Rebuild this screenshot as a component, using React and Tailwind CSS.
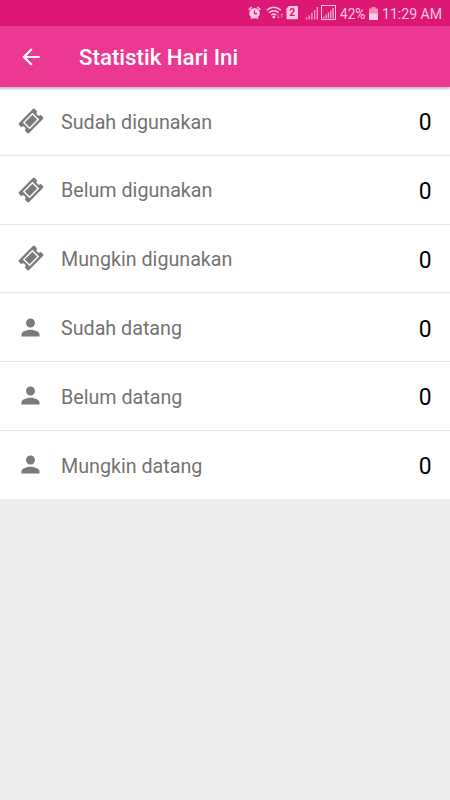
import React from "react";
import { MdPerson, MdArrowBack } from "react-icons/md";

const STATS = [
  { label: "Sudah digunakan", value: 0, icon: "ticket" },
  { label: "Belum digunakan", value: 0, icon: "ticket" },
  { label: "Mungkin digunakan", value: 0, icon: "ticket" },
  { label: "Sudah datang", value: 0, icon: "person" },
  { label: "Belum datang", value: 0, icon: "person" },
  { label: "Mungkin datang", value: 0, icon: "person" },
];

function TicketIcon() {
  return (
    <svg className="w-[26px] h-[26px] shrink-0" viewBox="-13 -13 26 26" fill="currentColor">
      <g transform="rotate(-45)">
        <path
          fillRule="evenodd"
          d="M-9.8-7.1H9.8Q11.2-7.1 11.2-5.7V-2.4A2.4 2.4 0 0 0 11.2 2.4V5.7Q11.2 7.1 9.8 7.1H-9.8Q-11.2 7.1-11.2 5.7V2.4A2.4 2.4 0 0 0-11.2-2.4V-5.7Q-11.2-7.1-9.8-7.1ZM-6.8-4.8V4.8H6.8V-4.8Z"
        />
        <rect x="-5.4" y="-3.4" width="10.8" height="6.8" />
      </g>
    </svg>
  );
}

function StatusIcons() {
  return (
    <svg className="w-[90px] h-[18px] shrink-0" viewBox="247 4 90 18" fill="none" stroke="currentColor">
      {/* alarm */}
      <circle cx="254.5" cy="13.3" r="5.3" fill="currentColor" stroke="none" />
      <path d="M248.7 9.8l3-2.8M260.3 9.8l-3-2.8M251 18.7l1.2-1.2M258 18.7l-1.2-1.2" strokeWidth="1.5" />
      <path d="M254.5 10.5v3.2h2.5" stroke="#dc1874" strokeWidth="1.2" />
      {/* wifi */}
      <path d="M266.8 10.2q7-5.8 14 0M269 12.6q4.8-3.8 9.6 0M271.2 15q2.6-2 5.2 0" strokeWidth="1.5" />
      <circle cx="273.8" cy="17" r="1.4" fill="currentColor" stroke="none" />
      <path d="M278.3 14v4m-1.2-1.2l1.2 1.2 1.2-1.2M281.8 18v-4m-1.2 1.2l1.2-1.2 1.2 1.2" strokeWidth=".8" opacity=".65" />
      {/* sim slot */}
      <path d="M289 6h8.2q.8 0 .8.8v11.6q0 .8-.8.8h-9.9q-.8 0-.8-.8V8.4z" fill="currentColor" stroke="none" />
      <text x="292.2" y="16.4" textAnchor="middle" fill="#dc1874" stroke="none" className="font-bold text-[10.5px]">2</text>
      {/* signal */}
      <path d="M306.5 19.5v-2M309.2 19.5v-4M311.9 19.5v-6.5M314.6 19.5v-9.5M317.3 19.5V7" strokeWidth="1.4" opacity=".75" />
      <rect x="321.5" y="5.5" width="14" height="14" strokeWidth="1" />
      <path d="M323.9 18.5v-2M326.2 18.5v-4M328.5 18.5v-6M330.8 18.5v-8M333.1 18.5v-10.5" strokeWidth="1.3" opacity=".85" />
    </svg>
  );
}

function StatusBar() {
  return (
    <div className="h-[26px] shrink-0 bg-[#dc1874] text-[#fbc8e0] flex items-center pl-[247px]">
      <StatusIcons />
      <span className="ml-[3px] pt-[3px] w-[26px] shrink-0 text-[15.5px] leading-none whitespace-nowrap origin-left scale-x-[.88]">
        42%
      </span>
      <svg className="ml-[3px] w-[9px] h-[13px] shrink-0" viewBox="0 0 9 13" fill="currentColor">
        <path d="M2.5 0h4v1.5H9V13H0V1.5h2.5z" opacity=".65" />
        <path d="M0 6.5h9V13H0z" />
      </svg>
      <span className="ml-[4px] pt-[3px] text-[15.5px] leading-none whitespace-nowrap origin-left scale-x-[.91]">
        11:29 AM
      </span>
    </div>
  );
}

function StatRow({ label, value, icon }) {
  return (
    <li className="h-[68.75px] last:h-[68.25px] bg-white border-b border-[#e6e6e6] last:border-b-0 flex items-center px-[18px]">
      <span className="w-[25px] flex justify-center text-[#7b7b7b]">
        {icon === "ticket" ? (
          <TicketIcon />
        ) : (
          <MdPerson className="w-[27px] h-[27px] shrink-0" />
        )}
      </span>
      <span className="ml-[18px] pt-[3px] text-[19.7px] text-[#737373]">{label}</span>
      <span className="ml-auto mr-px pt-[3px] text-[24px] text-black origin-right scale-x-95">{value}</span>
    </li>
  );
}

export default function App() {
  return (
    <div className="h-screen flex flex-col overflow-hidden bg-[#ededed] font-['Roboto',sans-serif]">
      <StatusBar />
      <header className="relative z-10 h-[61px] shrink-0 bg-[#ed3893] text-white flex items-center pl-[18px] shadow-[0_2px_2px_rgba(0,0,0,0.25)]">
        <MdArrowBack className="w-[26px] h-[26px]" />
        <h1 className="ml-[35px] pt-[2px] text-[22.3px] font-medium">Statistik Hari Ini</h1>
      </header>
      <ul>
        {STATS.map(s => (
          <StatRow key={s.label} {...s} />
        ))}
      </ul>
    </div>
  );
}
